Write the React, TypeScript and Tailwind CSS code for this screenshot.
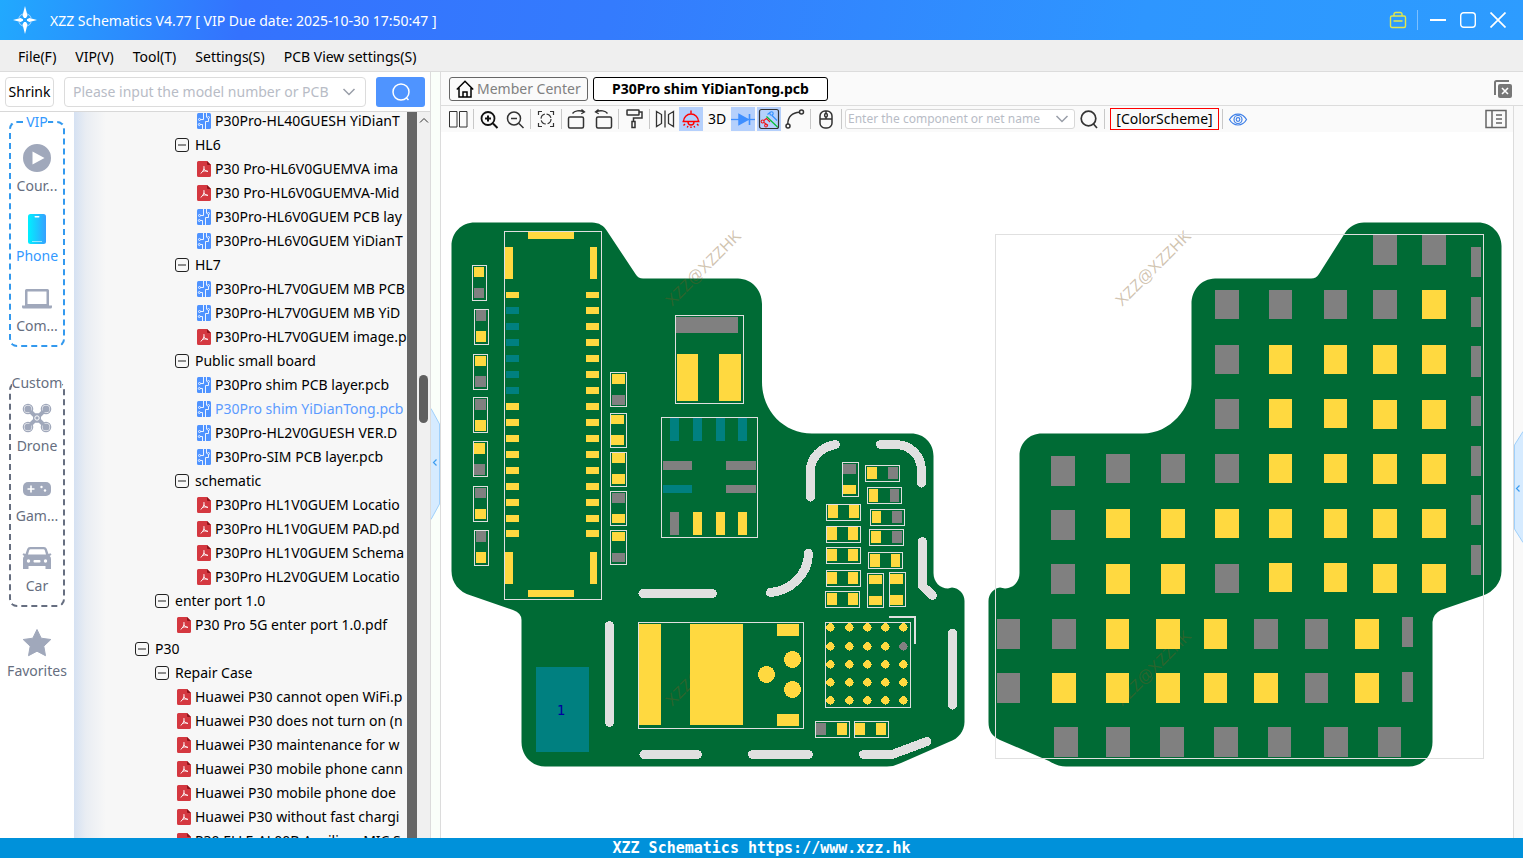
import React from 'react';

const YELLOW = '#ffd940';
const GRAY = '#808080';
const TEAL = '#008080';
const SILK = '#e0e0e0';
const BOARD = '#006b35';

type Tone = 'Y' | 'G' | 'T';
const tones: Record<Tone, string> = { Y: YELLOW, G: GRAY, T: TEAL };

/* x, y, width, height, tone */
type Pad = [number, number, number, number, Tone];
/* x, y, width, height */
type Frame = [number, number, number, number];

/* ---------- tree ---------- */

type Kind = 'folder' | 'pcb' | 'pdf';
interface Node {
  kind: Kind;
  indent: string;
  text: string;
  active?: boolean;
}

const D1 = 'pl-[61px]';
const D2 = 'pl-[81px]';
const D3 = 'pl-[101px]';
const F2 = 'pl-[103px]';
const F3 = 'pl-[123px]';

const nodes: Node[] = [
  { kind: 'pcb', indent: F3, text: 'P30Pro-HL40GUESH YiDianT' },
  { kind: 'folder', indent: D3, text: 'HL6' },
  { kind: 'pdf', indent: F3, text: 'P30 Pro-HL6V0GUEMVA ima' },
  { kind: 'pdf', indent: F3, text: 'P30 Pro-HL6V0GUEMVA-Mid' },
  { kind: 'pcb', indent: F3, text: 'P30Pro-HL6V0GUEM PCB lay' },
  { kind: 'pcb', indent: F3, text: 'P30Pro-HL6V0GUEM YiDianT' },
  { kind: 'folder', indent: D3, text: 'HL7' },
  { kind: 'pcb', indent: F3, text: 'P30Pro-HL7V0GUEM MB PCB' },
  { kind: 'pcb', indent: F3, text: 'P30Pro-HL7V0GUEM MB YiD' },
  { kind: 'pdf', indent: F3, text: 'P30Pro-HL7V0GUEM image.p' },
  { kind: 'folder', indent: D3, text: 'Public small board' },
  { kind: 'pcb', indent: F3, text: 'P30Pro shim PCB layer.pcb' },
  { kind: 'pcb', indent: F3, text: 'P30Pro shim YiDianTong.pcb', active: true },
  { kind: 'pcb', indent: F3, text: 'P30Pro-HL2V0GUESH VER.D' },
  { kind: 'pcb', indent: F3, text: 'P30Pro-SIM PCB layer.pcb' },
  { kind: 'folder', indent: D3, text: 'schematic' },
  { kind: 'pdf', indent: F3, text: 'P30Pro HL1V0GUEM Locatio' },
  { kind: 'pdf', indent: F3, text: 'P30Pro HL1V0GUEM PAD.pd' },
  { kind: 'pdf', indent: F3, text: 'P30Pro HL1V0GUEM Schema' },
  { kind: 'pdf', indent: F3, text: 'P30Pro HL2V0GUEM Locatio' },
  { kind: 'folder', indent: D2, text: 'enter port 1.0' },
  { kind: 'pdf', indent: F2, text: 'P30 Pro 5G enter port 1.0.pdf' },
  { kind: 'folder', indent: D1, text: 'P30' },
  { kind: 'folder', indent: D2, text: 'Repair Case' },
  { kind: 'pdf', indent: F2, text: 'Huawei P30 cannot open WiFi.p' },
  { kind: 'pdf', indent: F2, text: 'Huawei P30 does not turn on (n' },
  { kind: 'pdf', indent: F2, text: 'Huawei P30 maintenance for w' },
  { kind: 'pdf', indent: F2, text: 'Huawei P30 mobile phone cann' },
  { kind: 'pdf', indent: F2, text: 'Huawei P30 mobile phone doe' },
  { kind: 'pdf', indent: F2, text: 'Huawei P30 without fast chargi' },
  { kind: 'pdf', indent: F2, text: 'P30 ELLE-AL00B Auxiliary MIC S' },
];

function FolderIcon() {
  return (
    <svg viewBox="0 0 14 14" className="mr-1.5 h-3.5 w-3.5 shrink-0" fill="none" stroke="#222">
      <rect x="0.5" y="0.5" width="13" height="13" rx="2.5" />
      <path d="M3 7h8" />
    </svg>
  );
}

function PcbIcon() {
  return (
    <svg viewBox="0 0 14 16" className="mr-1 h-4 w-3.5 shrink-0" fill="none" stroke="#fff">
      <rect width="14" height="16" rx="1.5" fill="#4f93ff" stroke="none" />
      <path d="M6.5 0v6.500H3.500M11.500 5.500V8.500H8.500V16M5.500 16v-4.500H3.200M9.500 0v4.500" strokeWidth="0.9" />
      <circle cx="2.500" cy="6.500" r="1" strokeWidth="0.8" />
      <circle cx="11.500" cy="4.500" r="1" strokeWidth="0.8" />
      <circle cx="2.300" cy="11.500" r="1" strokeWidth="0.8" />
    </svg>
  );
}

function PdfIcon() {
  return (
    <svg viewBox="0 0 14 16" className="mr-1 h-4 w-3.5 shrink-0">
      <path d="M1.5 0H10l4 4v10.5a1.5 1.5 0 0 1-1.5 1.5h-11A1.5 1.5 0 0 1 0 14.5v-13A1.5 1.5 0 0 1 1.5 0z" fill="#d43840" />
      <path d="M10 0l4 4h-3a1 1 0 0 1-1-1z" fill="#8f141b" />
      <path d="M7 5.500c.5 2.500-.6 5-3 6.700M7.200 8c.6 1.300 1.600 2 3.300 2.300M5.600 10.300c1.500-.5 3-.6 4.900 0" fill="none" stroke="#fff" strokeWidth="1" strokeLinecap="round" />
    </svg>
  );
}

function TreeRow({ node }: { node: Node }) {
  return (
    <li className={`flex h-6 items-center whitespace-nowrap ${node.indent} ${node.active ? 'text-[#5b9bff]' : 'text-black'}`}>
      {node.kind === 'folder' && <FolderIcon />}
      {node.kind === 'pcb' && <PcbIcon />}
      {node.kind === 'pdf' && <PdfIcon />}
      <span>{node.text}</span>
    </li>
  );
}

/* ---------- categories ---------- */

function Category({ label, active, children }: { label: string; active?: boolean; children: React.ReactNode }) {
  return (
    <button type="button" className={`flex w-full flex-col items-center gap-0.5 ${active ? 'text-[#3399ff]' : 'text-[#666e80]'}`}>
      <svg viewBox="0 0 32 32" className="h-8 w-8 text-[#a0a8bb]" fill="currentColor">
        {children}
      </svg>
      <span className="h-5 leading-5">{label}</span>
    </button>
  );
}

const rotors = [
  [7, 7],
  [25, 7],
  [7, 25],
  [25, 25],
];

function Categories() {
  return (
    <nav aria-label="Categories" className="w-[74px] shrink-0 bg-white">
      <fieldset className="mx-[9px] rounded-lg border-2 border-dashed border-[#3399ee]">
        <legend className="mx-auto h-5 leading-5 text-[#3399ff]">VIP</legend>
        <div className="flex flex-col gap-4 pt-2.5 pb-[9px]">
          <Category label="Cour...">
            <path fillRule="evenodd" d="M16 2a14 14 0 1 0 0 28 14 14 0 0 0 0-28zM11.500 9.500v13l12-6.500z" />
          </Category>
          <Category label="Phone" active>
            <defs>
              <linearGradient id="phone" x1="0" x2="1" y1="0" y2="0">
                <stop offset="0" stopColor="#00f0ff" />
                <stop offset="1" stopColor="#36a0ff" />
              </linearGradient>
            </defs>
            <rect x="7" y="2" width="18" height="30" rx="2.500" fill="url(#phone)" />
            <rect x="13.500" y="4" width="5" height="1.500" rx="0.700" fill="#fff" />
            <path d="M11 29.500h10" stroke="#b7f1ff" strokeWidth="0.800" />
          </Category>
          <Category label="Com...">
            <path fillRule="evenodd" d="M4 8.500A1.500 1.500 0 0 1 5.500 7h21A1.500 1.500 0 0 1 28 8.500V24H4zM6.500 9.500V22h19V9.500z" />
            <path d="M1 23.500h30V25a1.500 1.500 0 0 1-1.500 1.500h-27A1.500 1.500 0 0 1 1 25z" />
          </Category>
        </div>
      </fieldset>
      <fieldset className="mx-[9px] mt-[26px] rounded-lg border-2 border-dashed border-[#666e80]">
        <legend className="mx-auto h-5 leading-5 text-[#666e80]">Custom</legend>
        <div className="flex flex-col gap-4 pt-[9px] pb-[9px]">
          <Category label="Drone">
            <path d="M8 8l5.500 5.500h5L24 8M8 24l5.500-5.500h5l5.500 5.500" fill="none" stroke="currentColor" strokeWidth="4" />
            {rotors.map(([x, y]) => (
              <g key={`${x}-${y}`}>
                <circle cx={x} cy={y} r="4.700" fill="#fff" stroke="currentColor" strokeWidth="1.200" />
                <circle cx={x} cy={y} r="3.600" />
              </g>
            ))}
            <path d="M8 8l5 5M24 8l-5 5M8 24l5-5M24 24l-5-5" stroke="currentColor" strokeWidth="3" />
            <rect x="12" y="11.500" width="8" height="9" rx="3" />
            <circle cx="16" cy="16" r="2.200" fill="none" stroke="#fff" strokeWidth="1" />
          </Category>
          <Category label="Gam...">
            <rect x="2" y="10" width="28" height="14" rx="5" />
            <path d="M6.500 17h7M10 13.500v7" stroke="#fff" strokeWidth="1.600" />
            <circle cx="20.500" cy="15" r="1.200" fill="#fff" />
            <circle cx="24" cy="18.500" r="1.200" fill="#fff" />
          </Category>
          <Category label="Car">
            <path
              fillRule="evenodd"
              d="M9 5h14a3 3 0 0 1 2.800 2L27.500 12l2-.8 1 1.600-1.800 1.200a4 4 0 0 1 1.300 3V27h-5.500v-3h-17v3H2V17a4 4 0 0 1 1.300-3L1.500 12.800l1-1.600 2 .8L6.200 7A3 3 0 0 1 9 5zM9.500 7.200a1.500 1.500 0 0 0-1.300 1L7 12.500h18l-1.200-4.300a1.500 1.500 0 0 0-1.300-1z"
            />
            <circle cx="7.500" cy="19" r="1.700" fill="#fff" />
            <circle cx="24.500" cy="19" r="1.700" fill="#fff" />
            <rect x="12.500" y="18" width="7" height="2.500" rx="1" fill="#fff" />
          </Category>
        </div>
      </fieldset>
      <div className="pt-5">
        <Category label="Favorites">
          <path d="M16 2.500l4.200 8.700 9.600 1.300-7 6.700 1.700 9.500L16 24.200l-8.500 4.500 1.700-9.500-7-6.700 9.600-1.300z" stroke="currentColor" strokeLinejoin="round" />
        </Category>
      </div>
    </nav>
  );
}

/* ---------- toolbar ---------- */

function Tool({ label, on, children }: { label: string; on?: boolean; children: React.ReactNode }) {
  return (
    <button type="button" aria-label={label} className={`flex h-6 w-6 shrink-0 items-center justify-center ${on ? 'bg-[#b5d0fc]' : ''}`}>
      <svg viewBox="0 0 24 24" className="h-6 w-6" fill="none" stroke="#333" strokeWidth="1.500">
        {children}
      </svg>
    </button>
  );
}

function Divider() {
  return <span className="mx-px h-5 w-px shrink-0 bg-[#c8c8c8]" />;
}

function Toolbar() {
  return (
    <div className="flex h-[26px] shrink-0 items-center gap-0.5 bg-[#fafafa] pl-[5px] pr-1.5">
      <Tool label="Split view">
        <path d="M3.500 4.500h7.500v15.500H3.500zM13.500 4.500H21v15.500h-7.500z" strokeWidth="1" />
      </Tool>
      <Divider />
      <Tool label="Zoom in">
        <circle cx="11" cy="11.500" r="6.500" stroke="#111" strokeWidth="1.800" />
        <path d="M16 16.500l4.500 4.500M8 11.500h6M11 8.500v6" stroke="#111" strokeWidth="2" />
      </Tool>
      <Tool label="Zoom out">
        <circle cx="11" cy="11.500" r="6.500" />
        <path d="M16 16.500l4.500 4.500M8 11.500h6" />
      </Tool>
      <Divider />
      <Tool label="Fit to window">
        <path d="M4.500 8V4.500H8M16 4.500h3.500V8M19.500 16v3.500H16M8 19.500H4.500V16" strokeWidth="1.200" />
        <circle cx="12" cy="12" r="5" strokeWidth="1.200" strokeDasharray="6 1.850" />
      </Tool>
      <Divider />
      <Tool label="Rotate right">
        <rect x="3.500" y="10" width="15" height="11" rx="1.500" />
        <path d="M7.500 6.500c2-2.800 7-3.600 11-1.800M16.500 2.500l3 2.500-3.200 1.800" strokeWidth="1.300" />
      </Tool>
      <Tool label="Rotate left">
        <rect x="5.500" y="10" width="15" height="11" rx="1.500" />
        <path d="M16.500 6.500c-2-2.800-7-3.600-11-1.800M7.500 2.500l-3 2.500 3.200 1.800" strokeWidth="1.300" />
      </Tool>
      <Divider />
      <Tool label="Paint">
        <rect x="5" y="3" width="12" height="5" rx="0.500" />
        <path d="M17 5h3v6h-8.500v3.500" />
        <rect x="10" y="14.500" width="3" height="6" />
      </Tool>
      <Divider />
      <Tool label="Mirror">
        <path d="M3.500 4.500l5 3v9l-5 3zM20.500 4.500l-5 3v9l5 3zM12 3.500v17" strokeWidth="1.300" />
      </Tool>
      <Tool label="Light" on>
        <g stroke="#f00" strokeWidth="1.400">
          <path d="M12 3.500v3M4.500 14.500a7.500 7.500 0 0 1 15 0zM3.500 14.500h17M9 15a3 3 0 0 0 6 0M6 17l-1.500 1.500M18 17l1.500 1.500M9 19l-.8 1.500M15 19l.8 1.500M12 19.500v1.500" />
        </g>
      </Tool>
      <button type="button" className="w-6 shrink-0 text-center text-sm">
        3D
      </button>
      <Tool label="Diode" on>
        <path d="M0 12.500h24" stroke="#3f8fff" strokeWidth="1.300" />
        <path d="M8 7.500v10l9-5z" fill="#3f8fff" stroke="#3f8fff" />
        <path d="M18.500 7v11" stroke="#3f8fff" strokeWidth="1.600" />
      </Tool>
      <Tool label="Net routing" on>
        <rect x="2.500" y="2.500" width="19" height="19" rx="2" strokeWidth="1.200" />
        <path d="M9.500 9.500L20.500 20" stroke="#00c030" strokeWidth="1.200" />
        <path d="M6.800 13.500l2.700-2 3.500 3.500M11 18.500l-4-3" stroke="#f01818" strokeWidth="1.100" />
        <path d="M15 8.500l5 5M10.500 7.500L13 5.500" stroke="#2f8fff" strokeWidth="1.100" />
        <circle cx="5.600" cy="14.500" r="1.500" stroke="#f01818" strokeWidth="1.100" />
        <circle cx="9" cy="18.600" r="1.400" stroke="#f01818" strokeWidth="1.100" />
        <circle cx="14.500" cy="6.500" r="1.700" stroke="#2f8fff" strokeWidth="1.100" />
      </Tool>
      <Tool label="Draw line">
        <circle cx="5" cy="19" r="2" />
        <circle cx="18.500" cy="5" r="2" />
        <path d="M4.800 17c0-7 4.500-11.500 11.700-11.800" />
      </Tool>
      <Divider />
      <Tool label="Mouse">
        <rect x="6" y="4" width="12" height="17" rx="5" />
        <path d="M6 12h12M12 4v3M12 9.500V12" />
        <rect x="10.700" y="6.500" width="2.600" height="3.500" rx="1.300" />
      </Tool>
      <Divider />
      <div className="flex h-5 w-[230px] shrink-0 items-center rounded-[3px] border border-[#d8d8d8] bg-white">
        <input
          aria-label="Component or net name"
          placeholder="Enter the component or net name"
          className="ml-0.5 w-[199px] bg-transparent text-xs outline-none placeholder:text-[#b8bcc6]"
        />
        <button type="button" aria-label="Search history" className="ml-2">
          <svg viewBox="0 0 14 14" className="h-3.5 w-3.5" fill="none" stroke="#999ea8" strokeWidth="1.500">
            <path d="M1.500 4L7 9.500 12.500 4" />
          </svg>
        </button>
      </div>
      <Tool label="Search">
        <circle cx="11.500" cy="11.500" r="7.300" strokeWidth="1.700" />
        <path d="M16.500 17l3.500 4" strokeWidth="1.700" />
      </Tool>
      <Divider />
      <button type="button" className="ml-0.5 h-[22px] w-[109px] shrink-0 border border-[#f00] text-center text-sm leading-5 whitespace-nowrap">
        [ColorScheme]
      </button>
      <Divider />
      <Tool label="Show layers">
        <g stroke="#3f80e8" strokeWidth="1.200">
          <path d="M3.500 12.500c4-7.300 13-7.300 17 0-4 7.300-13 7.300-17 0z" />
          <circle cx="12" cy="12.500" r="4" />
          <circle cx="12" cy="12.500" r="1.800" />
        </g>
      </Tool>
      <button type="button" aria-label="Toggle side panel" className="ml-auto">
        <svg viewBox="0 0 22 20" className="h-5 w-[22px]" fill="none" stroke="#666" strokeWidth="1.500">
          <path d="M1 1.500h20v17H1zM7 1.500v17" />
          <path d="M11 6h6M11 10h6M11 14h6" strokeWidth="1.300" />
        </svg>
      </button>
    </div>
  );
}

/* ---------- boards ---------- */

const rowYs = [292, 307, 323, 339, 355, 371, 387, 403, 419, 435, 451, 467, 483, 499, 515, 530];

const connectorPads: Pad[] = [
  [528, 232, 46, 7, 'Y'],
  [528, 590, 46, 7, 'Y'],
  [505, 247, 8, 32, 'Y'],
  [590, 247, 7, 32, 'Y'],
  [505, 552, 8, 32, 'Y'],
  [590, 552, 7, 32, 'Y'],
  ...rowYs.flatMap((y, i): Pad[] => [
    [506, y, 13, i === 0 ? 6 : 7, i > 0 && i < 7 ? 'T' : 'Y'],
    [586, y, 13, i === 0 ? 6 : 7, 'Y'],
  ]),
];

const frontPads: Pad[] = [
  ...connectorPads,
  [474, 267, 10, 10, 'Y'], [474, 288, 10, 10, 'G'],
  [476, 310, 10, 11, 'G'], [476, 331, 10, 11, 'Y'],
  [475, 356, 11, 10, 'Y'], [475, 376, 11, 11, 'G'],
  [475, 399, 11, 11, 'G'], [475, 420, 11, 11, 'Y'],
  [474, 443, 11, 11, 'Y'], [474, 464, 11, 11, 'G'],
  [475, 488, 11, 10, 'G'], [475, 509, 11, 10, 'Y'],
  [476, 531, 10, 11, 'G'], [476, 552, 10, 11, 'Y'],
  [612, 374, 13, 10, 'Y'], [612, 395, 13, 10, 'G'],
  [611, 415, 13, 9, 'Y'], [611, 435, 13, 10, 'Y'],
  [612, 453, 13, 10, 'Y'], [612, 474, 13, 10, 'Y'],
  [612, 493, 13, 10, 'G'], [612, 514, 13, 9, 'Y'],
  [612, 532, 13, 9, 'Y'], [612, 553, 13, 9, 'G'],
  [676, 317, 62, 16, 'G'], [677, 354, 21, 47, 'Y'], [719, 354, 22, 47, 'Y'],
  [670, 418, 9, 23, 'T'], [693, 418, 9, 23, 'T'], [716, 418, 9, 23, 'T'], [738, 418, 9, 23, 'T'],
  [663, 461, 29, 9, 'G'], [726, 461, 30, 9, 'G'],
  [663, 485, 29, 8, 'T'], [726, 485, 30, 8, 'G'],
  [670, 512, 9, 23, 'G'], [693, 512, 9, 23, 'Y'], [716, 512, 9, 23, 'Y'], [738, 512, 9, 23, 'Y'],
  [843, 464, 13, 10, 'G'], [843, 485, 13, 9, 'Y'],
  [867, 467, 10, 12, 'Y'], [888, 467, 10, 12, 'G'],
  [869, 489, 9, 13, 'Y'], [890, 489, 9, 13, 'G'],
  [872, 511, 9, 12, 'Y'], [892, 511, 10, 12, 'G'],
  [871, 531, 10, 12, 'Y'], [892, 531, 10, 12, 'G'],
  [870, 554, 10, 13, 'Y'], [891, 554, 9, 13, 'Y'],
  [828, 505, 10, 13, 'Y'], [849, 505, 10, 13, 'Y'],
  [827, 527, 10, 13, 'Y'], [848, 527, 10, 13, 'Y'],
  [827, 549, 10, 12, 'Y'], [848, 549, 10, 12, 'Y'],
  [827, 572, 10, 12, 'Y'], [848, 572, 10, 12, 'Y'],
  [827, 593, 10, 12, 'Y'], [848, 593, 10, 12, 'Y'],
  [869, 575, 13, 9, 'Y'], [869, 596, 13, 9, 'Y'],
  [890, 574, 13, 10, 'Y'], [890, 595, 13, 10, 'Y'],
  [816, 723, 10, 12, 'G'], [837, 723, 10, 12, 'Y'],
  [855, 723, 10, 12, 'Y'], [876, 723, 10, 12, 'Y'],
  [639, 624, 22, 101, 'Y'], [690, 624, 53, 101, 'Y'],
  [777, 624, 22, 12, 'Y'], [777, 714, 22, 12, 'Y'],
  [536, 667, 53, 85, 'T'],
];

const frontFrames: Frame[] = [
  [504.5, 231.5, 97, 368],
  [472.5, 265.5, 14, 35], [474.5, 309.5, 14, 35], [473.5, 354.5, 14, 35], [473.5, 397.5, 14, 35],
  [473.5, 441.5, 14, 35], [473.5, 486.5, 14, 35], [474.5, 530.5, 14, 35],
  [610.5, 372.5, 16, 34], [610.5, 413.5, 16, 34], [610.5, 452.5, 16, 34], [610.5, 491.5, 16, 34], [610.5, 530.5, 16, 34],
  [675.5, 315.5, 68, 88], [661.5, 417.5, 96, 120],
  [842.5, 462.5, 16, 34],
  [865.5, 465.5, 34, 16], [867.5, 487.5, 34, 16], [870.5, 509.5, 34, 16], [869.5, 529.5, 34, 16], [868.5, 552.5, 34, 16],
  [826.5, 504.5, 34, 16], [826.5, 526.5, 34, 16], [826.5, 547.5, 34, 16], [826.5, 570.5, 34, 16], [825.5, 591.5, 34, 16],
  [867.5, 573.5, 16, 34], [889.5, 572.5, 16, 34],
  [815.5, 721.5, 34, 16], [854.5, 721.5, 34, 16],
  [825.5, 622.5, 85, 85], [638.5, 622.5, 165, 106],
];

const ballXs = [830.5, 849.5, 867.5, 885.5, 903.5];
const ballYs = [627.5, 646.5, 664.5, 682.5, 700.5];

const backPads: Pad[] = [
  [1373, 235, 24, 30, 'G'], [1422, 235, 24, 30, 'G'],
  [1215, 290, 24, 29, 'G'], [1269, 290, 23, 29, 'G'], [1324, 290, 23, 29, 'G'], [1373, 290, 24, 29, 'G'], [1422, 290, 24, 29, 'Y'],
  [1215, 345, 24, 29, 'G'], [1269, 345, 23, 29, 'Y'], [1324, 345, 23, 29, 'Y'], [1373, 345, 24, 29, 'Y'], [1422, 345, 24, 29, 'Y'],
  [1215, 399, 24, 30, 'G'], [1269, 399, 23, 29, 'Y'], [1324, 399, 23, 29, 'Y'], [1373, 400, 24, 29, 'Y'], [1422, 400, 24, 29, 'Y'],
  [1051, 456, 24, 30, 'G'], [1106, 454, 24, 29, 'G'], [1161, 454, 24, 29, 'G'], [1215, 454, 24, 29, 'G'],
  [1269, 454, 23, 29, 'Y'], [1324, 454, 23, 29, 'Y'], [1373, 454, 24, 30, 'Y'], [1422, 454, 24, 30, 'Y'],
  [1051, 510, 24, 30, 'G'], [1106, 509, 24, 29, 'Y'], [1161, 509, 24, 29, 'Y'], [1215, 509, 24, 29, 'Y'],
  [1269, 509, 23, 29, 'Y'], [1324, 509, 23, 29, 'Y'], [1373, 509, 24, 29, 'Y'], [1422, 509, 24, 29, 'Y'],
  [1051, 564, 24, 30, 'G'], [1106, 564, 24, 30, 'Y'], [1161, 564, 24, 30, 'Y'], [1215, 564, 24, 29, 'G'],
  [1269, 563, 23, 29, 'Y'], [1324, 563, 23, 29, 'Y'], [1373, 564, 24, 29, 'Y'], [1422, 564, 24, 29, 'Y'],
  [997, 619, 23, 30, 'G'], [1052, 619, 24, 30, 'G'], [1106, 619, 23, 30, 'Y'], [1156, 619, 24, 30, 'Y'],
  [1204, 619, 23, 30, 'Y'], [1254, 619, 24, 30, 'G'], [1305, 619, 23, 30, 'G'], [1355, 619, 24, 30, 'Y'], [1402, 617, 11, 30, 'G'],
  [997, 673, 23, 30, 'G'], [1052, 673, 24, 30, 'Y'], [1106, 673, 23, 30, 'Y'], [1156, 673, 24, 30, 'Y'],
  [1204, 673, 23, 30, 'Y'], [1254, 673, 24, 30, 'Y'], [1305, 673, 23, 30, 'G'], [1355, 673, 24, 30, 'Y'], [1402, 672, 11, 30, 'G'],
  [1054, 727, 24, 30, 'G'], [1106, 727, 24, 30, 'G'], [1160, 727, 24, 30, 'G'], [1214, 727, 24, 30, 'G'],
  [1268, 727, 23, 30, 'G'], [1324, 727, 24, 30, 'G'], [1378, 727, 23, 30, 'G'],
  [1471, 247, 10, 30, 'G'], [1471, 297, 10, 30, 'G'], [1471, 346, 10, 31, 'G'], [1471, 396, 10, 30, 'G'],
  [1471, 446, 10, 30, 'G'], [1471, 495, 10, 30, 'G'], [1471, 545, 10, 30, 'G'],
];

const frontOutline =
  'M451.500 246C451.500 233 461 222.500 475 222.500H592C599 222.500 604 226 607 231L635.500 274Q638.500 279 644 278.500H738C752 279 762 290 762 304V382C762 411 784 433.500 812 433.500H911C924 433.500 933.500 443 933.500 456V573C933.500 582 940 588.500 948 588.500L952 587.500C959 588 964.500 594 964.500 601V722C964.500 731 958 739 950 741.500L901 763Q894 766.500 887 766.500H545C532 766.500 521.500 756 521.500 742V620Q521.500 613 513 610L471 595.500C459 592 451.500 583 451.500 571Z';

const backOutline =
  'M1501.500 246C1501.500 233 1491 222.500 1478 222.500H1364C1356 222.500 1349 227 1345 233L1319 274Q1316 279 1310 278.500H1215C1201 279 1191.500 290 1191.500 304V384C1191.500 408 1170 433.500 1143 433.500H1042C1029 433.500 1019.500 443 1019.500 456V573C1019.500 582 1013 588.500 1005 588.500L1000 587.500C994 588 988.500 594 988.500 601V722C988.500 731 992 736 1000 740L1049 761Q1058 766.500 1066 766.500H1409C1422 766.500 1432.500 756 1432.500 742V622Q1433 614 1441 610L1483 595.500C1493 592 1501.500 583 1501.500 571Z';

const traces = [
  'M609.500 625.500V722.500',
  'M643 593.500H712.500',
  'M644 754.500H697.500',
  'M752.500 754.500H808.500',
  'M863.500 754.500H892L927 741.500',
  'M770.500 592.500C790 591 808 575 808.500 553.500',
  'M810.500 497V470C810.500 458 821 447 835.500 444.500',
  'M880.500 444.500H896C911 445 921 456 921.500 470V483',
  'M922.500 541.500V586L932.500 595.500',
  'M952.500 633V705',
];

const marks = [
  [672, 307],
  [1122, 307],
  [672, 707],
  [1122, 707],
];

function Pads({ pads }: { pads: Pad[] }) {
  return (
    <>
      {pads.map(([x, y, w, h, tone], i) => (
        <rect key={i} x={x} y={y} width={w} height={h} fill={tones[tone]} />
      ))}
    </>
  );
}

function BoardView() {
  return (
    <svg viewBox="441 132 1072 706" className="min-h-0 w-full flex-1 bg-white" role="img" aria-label="P30Pro shim board, front and back">
      <path d={frontOutline} fill={BOARD} />
      <path d={backOutline} fill={BOARD} />
      {marks.map(([x, y]) => (
        <text key={`${x}-${y}`} transform={`translate(${x} ${y}) rotate(-45)`} fontSize="16" fontFamily="Liberation Sans, sans-serif" fill="#7d581e" fillOpacity="0.36">
          XZZ@XZZHK
        </text>
      ))}
      <g shapeRendering="crispEdges">
        <Pads pads={frontPads} />
        <Pads pads={backPads} />
        <g fill={YELLOW}>
          <circle cx="792.500" cy="659.500" r="8.500" />
          <circle cx="766.500" cy="674.500" r="8.500" />
          <circle cx="792.500" cy="689.500" r="8.500" />
        </g>
        {ballYs.map((y, row) =>
          ballXs.map((x, col) => <circle key={`${row}-${col}`} cx={x} cy={y} r="4.200" fill={row === 1 && col === 4 ? GRAY : YELLOW} />),
        )}
        <g fill="none" stroke={SILK}>
          {frontFrames.map(([x, y, w, h]) => (
            <rect key={`${x}-${y}`} x={x} y={y} width={w} height={h} />
          ))}
          <rect x="995.500" y="234.500" width="488" height="524" />
          <path d="M889 617H915V644" strokeWidth="2" />
          {traces.map((d) => (
            <path key={d} d={d} strokeWidth="9" strokeLinecap="round" strokeLinejoin="round" />
          ))}
        </g>
      </g>
      <text x="561" y="715" textAnchor="middle" fontSize="14" fontFamily="DejaVu Sans Mono, monospace" fill="#0000a0">
        1
      </text>
    </svg>
  );
}

function Handle() {
  return (
    <button type="button" aria-label="Collapse panel" className="block w-[9px]">
      <svg viewBox="0 0 9 112" className="h-28 w-[9px]" fill="#d6ebff" stroke="#9fd0fb">
        <path d="M0 0.500L8.500 16V96L0 111.500" />
        <path d="M5.500 51.500L2.500 54.500l3 3" fill="none" stroke="#3d9cf0" strokeWidth="1.200" />
      </svg>
    </button>
  );
}

function HandleRight() {
  return (
    <button type="button" aria-label="Expand panel" className="block w-[9px]">
      <svg viewBox="0 0 9 112" className="h-28 w-[9px]" fill="#d6ebff" stroke="#9fd0fb">
        <path d="M9 0.500L0.500 14V98L9 111.500" />
        <path d="M5.500 54.500L2.500 57.500l3 3" fill="none" stroke="#3d9cf0" strokeWidth="1.200" />
      </svg>
    </button>
  );
}

/* ---------- shell ---------- */

const menus = ['File(F)', 'VIP(V)', 'Tool(T)', 'Settings(S)', 'PCB View settings(S)'];

export default function App() {
  return (
    <div className="flex h-screen flex-col overflow-hidden bg-white font-['Noto_Sans',sans-serif] text-sm text-black">
      <header className="flex h-10 shrink-0 items-center bg-[linear-gradient(100deg,#21a9fe_0%,#3472fe_16%,#347bfd_40%,#2e96ff_75%,#2d9cff_100%)] pr-[17px] pl-3 text-white">
        <svg viewBox="0 0 26 30" className="h-[30px] w-[26px]" fill="#fff">
          <path d="M13 1l2.500 9.500L14 13h-2l-1.500-2.500zM13 29l2.500-9.500L14 17h-2l-1.500 2.500zM1 15l7.500-2 2.500 1.300v1.400L8.500 17zM25 15l-7.500-2-2.500 1.300v1.400l2.500 1.300z" />
          <circle cx="13" cy="15" r="6.500" fill="none" stroke="#b8dcff" strokeWidth="0.900" strokeDasharray="6 4" strokeDashoffset="-2" />
        </svg>
        <h1 className="ml-3 pt-0.5">XZZ Schematics V4.77 [ VIP Due date: 2025-10-30 17:50:47 ]</h1>
        <div className="ml-auto flex items-center">
          <button type="button" aria-label="Toolbox">
            <svg viewBox="0 0 18 18" className="h-[18px] w-[18px]" fill="none" stroke="#e3e84c" strokeWidth="1.400">
              <rect x="1.500" y="5" width="15" height="11.500" rx="1.500" />
              <path d="M5 5V3.200A1.700 1.700 0 0 1 6.700 1.500h4.600A1.700 1.700 0 0 1 13 3.200V5M4.500 10h9" />
            </svg>
          </button>
          <span className="ml-2.5 h-5 w-px bg-[#7dc0ff]" />
          <button type="button" aria-label="Minimize" className="ml-3">
            <svg viewBox="0 0 16 16" className="h-4 w-4" stroke="#fff" strokeWidth="2">
              <path d="M0 8h16" />
            </svg>
          </button>
          <button type="button" aria-label="Maximize" className="ml-3.5">
            <svg viewBox="0 0 16 16" className="h-4 w-4" fill="none" stroke="#fff" strokeWidth="1.400">
              <rect x="0.700" y="0.700" width="14.600" height="14.600" rx="3" />
            </svg>
          </button>
          <button type="button" aria-label="Close" className="ml-3.5">
            <svg viewBox="0 0 16 16" className="h-4 w-4" stroke="#fff" strokeWidth="1.700">
              <path d="M0.500 0.500l15 15M15.500 0.500l-15 15" />
            </svg>
          </button>
        </div>
      </header>

      <nav aria-label="Menu" className="flex h-8 shrink-0 items-center gap-[19px] border-b border-[#dcdcdc] bg-[#efefef] px-[18px] pt-[3px]">
        {menus.map((m) => (
          <button key={m} type="button">
            {m}
          </button>
        ))}
      </nav>

      <div className="flex min-h-0 flex-1">
        <aside className="flex w-[431px] shrink-0 flex-col border-r border-[#dcdcdc]">
          <div className="flex h-10 shrink-0 items-center border-b border-[#d8d8d8] pl-[5px] pt-px">
            <button type="button" className="h-[30px] w-[49px] rounded border border-[#dcdcdc] whitespace-nowrap">
              Shrink
            </button>
            <div className="ml-2.5 flex h-[30px] w-[302px] items-center rounded border border-[#dcdcdc]">
              <input
                aria-label="Model number or PCB"
                placeholder="Please input the model number or PCB"
                className="ml-2 w-[263px] outline-none placeholder:text-[#b8bcc6]"
              />
              <button type="button" aria-label="Recent searches" className="ml-1.5">
                <svg viewBox="0 0 14 14" className="h-3.5 w-3.5" fill="none" stroke="#999ea8" strokeWidth="1.500">
                  <path d="M1.500 4L7 9.500 12.500 4" />
                </svg>
              </button>
            </div>
            <button type="button" aria-label="Search models" className="ml-2.5 flex h-[30px] w-[49px] items-center justify-center rounded-[3px] bg-[#4f94ff]">
              <svg viewBox="0 0 20 20" className="h-5 w-5" fill="none" stroke="#fff" strokeWidth="1.500">
                <circle cx="10" cy="10" r="8" />
                <path d="M15 15.500l2.500 2.500" />
              </svg>
            </button>
          </div>
          <div className="flex min-h-0 flex-1">
            <Categories />
            <div className="min-w-0 flex-1 overflow-hidden bg-[linear-gradient(90deg,#d5e1f2_0px,#e9edf3_12px,#f7f7f7_32px)]">
              <ul className="-mt-[3px]">
                {nodes.map((n, i) => (
                  <TreeRow key={i} node={n} />
                ))}
              </ul>
            </div>
            <div className="w-2.5 shrink-0 bg-[#666]" />
            <div className="flex w-[13px] shrink-0 flex-col items-center bg-[#f0f0f0] pt-1">
              <svg viewBox="0 0 10 8" className="h-2 w-2.5" fill="none" stroke="#333">
                <path d="M1 6.500l4-4 4 4" />
              </svg>
              <div className="mt-[251px] h-12 w-[9px] rounded-full bg-[#5f5f5f]" />
            </div>
          </div>
        </aside>

        <div className="w-[9px] shrink-0 bg-[#fafffa] pt-[336px]">
          <Handle />
        </div>

        <main className="flex min-w-0 flex-1 flex-col border-l border-[#dcdcdc]">
          <div className="flex h-[34px] shrink-0 items-center border-b border-[#dcdcdc] bg-[#fafafa] pl-2 pr-[11px]">
            <button type="button" className="flex h-6 w-[139px] items-center gap-[3px] rounded-[3px] border border-[#666] pl-1.5 whitespace-nowrap text-[#808080]">
              <svg viewBox="0 0 18 18" className="h-[18px] w-[18px] shrink-0" fill="none" stroke="#000" strokeWidth="1.500">
                <path d="M0.800 9.500L9 1.200l8.200 8.300M3 8v9h12V8M7 17v-5h4v5" />
              </svg>
              Member Center
            </button>
            <button type="button" className="ml-[5px] h-6 w-[235px] rounded-[3px] border border-black bg-white font-bold whitespace-nowrap">
              P30Pro shim YiDianTong.pcb
            </button>
            <button type="button" aria-label="Close all tabs" className="ml-auto">
              <svg viewBox="0 0 18 18" className="h-[18px] w-[18px]">
                <path d="M1 15V2.500A1.500 1.500 0 0 1 2.500 1H15" fill="none" stroke="#777" strokeWidth="2" />
                <rect x="4" y="4" width="14" height="14" rx="2" fill="#777" />
                <path d="M8 8l6 6M14 8l-6 6" stroke="#fff" strokeWidth="1.600" />
              </svg>
            </button>
          </div>
          <div className="flex min-h-0 flex-1">
            <div className="flex min-w-0 flex-1 flex-col">
              <Toolbar />
              <BoardView />
            </div>
            <div className="w-2.5 shrink-0 border-l border-[#dcdcdc] bg-[#f9f9f9] pt-[325px]">
              <HandleRight />
            </div>
          </div>
        </main>
      </div>

      <footer className="h-5 shrink-0 bg-[#0091da] text-center font-['DejaVu_Sans_Mono',monospace] text-[15px] leading-5 font-bold text-white">
        XZZ Schematics https://www.xzz.hk
      </footer>
    </div>
  );
}
